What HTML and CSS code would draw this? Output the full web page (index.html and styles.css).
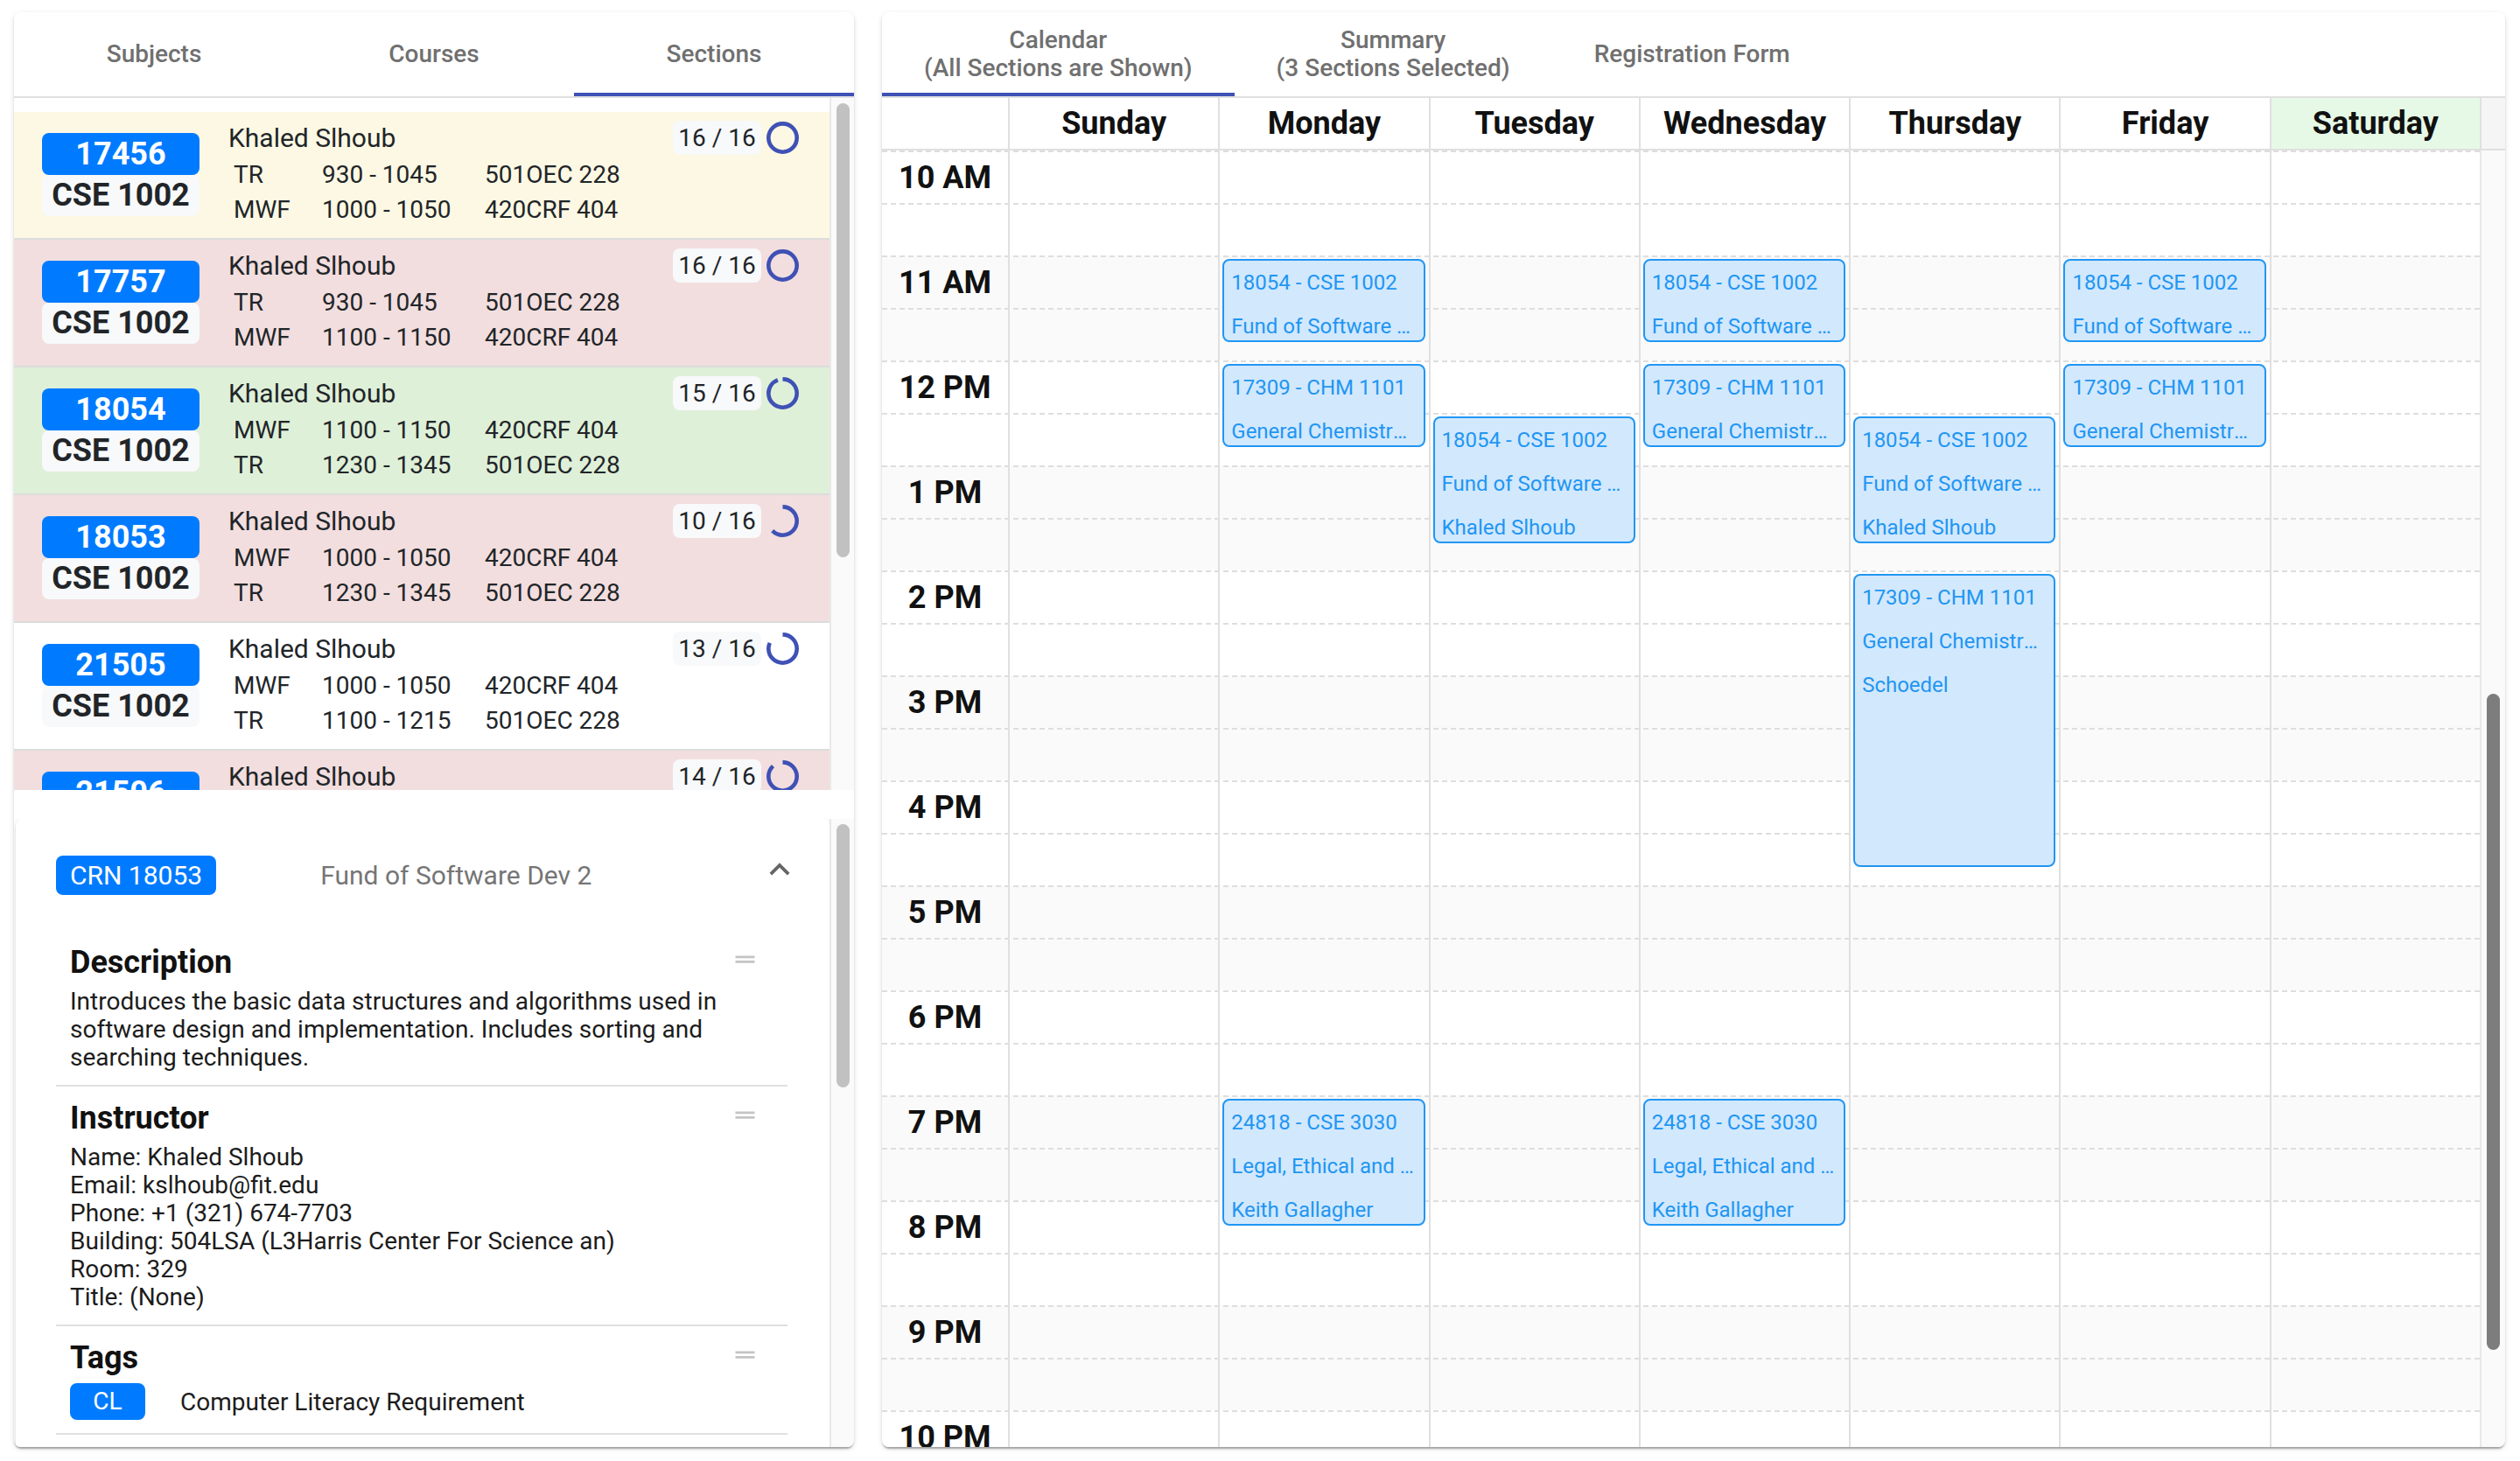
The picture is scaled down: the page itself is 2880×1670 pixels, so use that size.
FILE: index.html
```html
<!DOCTYPE html>
<html lang="en">
<head>
<meta charset="utf-8">
<title>Schedule Planner</title>
<link rel="stylesheet" href="styles.css">
</head>
<body>
<div class="app">
  <section class="panel left">
    <nav class="tabs">
      <div class="tab tab-eq">Subjects</div>
      <div class="tab tab-eq">Courses</div>
      <div class="tab tab-eq selected">Sections</div>
    </nav>

    <div class="list-wrap">
      <div class="sections">
        <div class="sec bg-warn">
          <div class="crn"><div class="crn-num">17456</div><div class="crn-course">CSE 1002</div></div>
          <div class="info">
            <div class="name">Khaled Slhoub</div>
            <div class="meet"><span>TR</span><span>930 - 1045</span><span>501OEC 228</span><span>MWF</span><span>1000 - 1050</span><span>420CRF 404</span></div>
          </div>
          <div class="cap"><span class="count">16 / 16</span><svg class="ring" viewBox="0 0 36 36"><circle cx="18" cy="18" r="15.75" stroke-dasharray="98.96" stroke-dashoffset="0"/></svg></div>
        </div>
        <div class="sec bg-danger">
          <div class="crn"><div class="crn-num">17757</div><div class="crn-course">CSE 1002</div></div>
          <div class="info">
            <div class="name">Khaled Slhoub</div>
            <div class="meet"><span>TR</span><span>930 - 1045</span><span>501OEC 228</span><span>MWF</span><span>1100 - 1150</span><span>420CRF 404</span></div>
          </div>
          <div class="cap"><span class="count">16 / 16</span><svg class="ring" viewBox="0 0 36 36"><circle cx="18" cy="18" r="15.75" stroke-dasharray="98.96" stroke-dashoffset="0"/></svg></div>
        </div>
        <div class="sec bg-success">
          <div class="crn"><div class="crn-num">18054</div><div class="crn-course">CSE 1002</div></div>
          <div class="info">
            <div class="name">Khaled Slhoub</div>
            <div class="meet"><span>MWF</span><span>1100 - 1150</span><span>420CRF 404</span><span>TR</span><span>1230 - 1345</span><span>501OEC 228</span></div>
          </div>
          <div class="cap"><span class="count">15 / 16</span><svg class="ring" viewBox="0 0 36 36"><circle cx="18" cy="18" r="15.75" stroke-dasharray="98.96" stroke-dashoffset="6.18"/></svg></div>
        </div>
        <div class="sec bg-danger">
          <div class="crn"><div class="crn-num">18053</div><div class="crn-course">CSE 1002</div></div>
          <div class="info">
            <div class="name">Khaled Slhoub</div>
            <div class="meet"><span>MWF</span><span>1000 - 1050</span><span>420CRF 404</span><span>TR</span><span>1230 - 1345</span><span>501OEC 228</span></div>
          </div>
          <div class="cap"><span class="count">10 / 16</span><svg class="ring" viewBox="0 0 36 36"><circle cx="18" cy="18" r="15.75" stroke-dasharray="98.96" stroke-dashoffset="37.11"/></svg></div>
        </div>
        <div class="sec">
          <div class="crn"><div class="crn-num">21505</div><div class="crn-course">CSE 1002</div></div>
          <div class="info">
            <div class="name">Khaled Slhoub</div>
            <div class="meet"><span>MWF</span><span>1000 - 1050</span><span>420CRF 404</span><span>TR</span><span>1100 - 1215</span><span>501OEC 228</span></div>
          </div>
          <div class="cap"><span class="count">13 / 16</span><svg class="ring" viewBox="0 0 36 36"><circle cx="18" cy="18" r="15.75" stroke-dasharray="98.96" stroke-dashoffset="18.56"/></svg></div>
        </div>
        <div class="sec bg-danger">
          <div class="crn"><div class="crn-num">21506</div></div>
          <div class="info">
            <div class="name">Khaled Slhoub</div>
          </div>
          <div class="cap"><span class="count">14 / 16</span><svg class="ring" viewBox="0 0 36 36"><circle cx="18" cy="18" r="15.75" stroke-dasharray="98.96" stroke-dashoffset="12.37"/></svg></div>
        </div>
      </div>
      <div class="sbar"><div class="thumb thumb-list"></div></div>
    </div>

    <div class="details-wrap">
      <div class="details">
        <div class="acc">
          <div class="acc-sum">
            <span class="crn-badge">CRN 18053</span>
            <span class="acc-title">Fund of Software Dev 2</span>
            <svg class="chev" viewBox="0 0 24 24"><path d="M12 8l-6 6 1.41 1.41L12 10.83l4.59 4.58L18 14z"/></svg>
          </div>
          <div class="acc-body">
            <div class="sect">
              <div class="sect-head"><span class="sect-title">Description</span><svg class="handle" viewBox="0 0 24 24"><path d="M20 9H4v2h16V9zM4 15h16v-2H4v2z"/></svg></div>
              <p class="sect-text">Introduces the basic data structures and algorithms used in software design and implementation. Includes sorting and searching techniques.</p>
            </div>
            <div class="sect">
              <div class="sect-head"><span class="sect-title">Instructor</span><svg class="handle" viewBox="0 0 24 24"><path d="M20 9H4v2h16V9zM4 15h16v-2H4v2z"/></svg></div>
              <div class="sect-text">
                <div>Name: Khaled Slhoub</div>
                <div>Email: kslhoub@fit.edu</div>
                <div>Phone: +1 (321) 674-7703</div>
                <div>Building: 504LSA (L3Harris Center For Science an)</div>
                <div>Room: 329</div>
                <div>Title: (None)</div>
              </div>
            </div>
            <div class="sect">
              <div class="sect-head"><span class="sect-title">Tags</span><svg class="handle" viewBox="0 0 24 24"><path d="M20 9H4v2h16V9zM4 15h16v-2H4v2z"/></svg></div>
              <div class="tag-row"><span class="tag">CL</span><span>Computer Literacy Requirement</span></div>
            </div>
          </div>
        </div>
      </div>
      <div class="sbar"><div class="thumb thumb-details"></div></div>
    </div>
  </section>

  <section class="panel right">
    <nav class="tabs">
      <div class="tab tab-pad selected">Calendar<br>(All Sections are Shown)</div>
      <div class="tab tab-pad">Summary<br>(3 Sections Selected)</div>
      <div class="tab tab-pad">Registration Form</div>
    </nav>
    <div class="cal">
      <div class="cal-head">
        <div class="head-cell time-head"></div>
        <div class="head-cell">Sunday</div>
        <div class="head-cell">Monday</div>
        <div class="head-cell">Tuesday</div>
        <div class="head-cell">Wednesday</div>
        <div class="head-cell">Thursday</div>
        <div class="head-cell">Friday</div>
        <div class="head-cell today">Saturday</div>
        <div class="head-cell gutter"></div>
      </div>
      <div class="cal-main">
        <div class="cal-body">
          <div class="cal-canvas">
            <div class="hours">
              <div class="hour"><div class="half"><span class="hlabel">10 AM</span></div><div class="half"></div></div>
              <div class="hour"><div class="half"><span class="hlabel">11 AM</span></div><div class="half"></div></div>
              <div class="hour"><div class="half"><span class="hlabel">12 PM</span></div><div class="half"></div></div>
              <div class="hour"><div class="half"><span class="hlabel">1 PM</span></div><div class="half"></div></div>
              <div class="hour"><div class="half"><span class="hlabel">2 PM</span></div><div class="half"></div></div>
              <div class="hour"><div class="half"><span class="hlabel">3 PM</span></div><div class="half"></div></div>
              <div class="hour"><div class="half"><span class="hlabel">4 PM</span></div><div class="half"></div></div>
              <div class="hour"><div class="half"><span class="hlabel">5 PM</span></div><div class="half"></div></div>
              <div class="hour"><div class="half"><span class="hlabel">6 PM</span></div><div class="half"></div></div>
              <div class="hour"><div class="half"><span class="hlabel">7 PM</span></div><div class="half"></div></div>
              <div class="hour"><div class="half"><span class="hlabel">8 PM</span></div><div class="half"></div></div>
              <div class="hour"><div class="half"><span class="hlabel">9 PM</span></div><div class="half"></div></div>
              <div class="hour"><div class="half"><span class="hlabel">10 PM</span></div><div class="half"></div></div>
            </div>
            <div class="days">
              <div class="day"></div>
              <div class="day">
                <div class="ev" style="top:124px;height:95px"><div>18054 - CSE 1002</div><div>Fund of Software Dev 2</div></div>
                <div class="ev" style="top:244px;height:95px"><div>17309 - CHM 1101</div><div>General Chemistry 1</div></div>
                <div class="ev" style="top:1084px;height:145px"><div>24818 - CSE 3030</div><div>Legal, Ethical and Social Issues</div><div>Keith Gallagher</div></div>
              </div>
              <div class="day">
                <div class="ev" style="top:304px;height:145px"><div>18054 - CSE 1002</div><div>Fund of Software Dev 2</div><div>Khaled Slhoub</div></div>
              </div>
              <div class="day">
                <div class="ev" style="top:124px;height:95px"><div>18054 - CSE 1002</div><div>Fund of Software Dev 2</div></div>
                <div class="ev" style="top:244px;height:95px"><div>17309 - CHM 1101</div><div>General Chemistry 1</div></div>
                <div class="ev" style="top:1084px;height:145px"><div>24818 - CSE 3030</div><div>Legal, Ethical and Social Issues</div><div>Keith Gallagher</div></div>
              </div>
              <div class="day">
                <div class="ev" style="top:304px;height:145px"><div>18054 - CSE 1002</div><div>Fund of Software Dev 2</div><div>Khaled Slhoub</div></div>
                <div class="ev" style="top:484px;height:335px"><div>17309 - CHM 1101</div><div>General Chemistry 1</div><div>Schoedel</div></div>
              </div>
              <div class="day">
                <div class="ev" style="top:124px;height:95px"><div>18054 - CSE 1002</div><div>Fund of Software Dev 2</div></div>
                <div class="ev" style="top:244px;height:95px"><div>17309 - CHM 1101</div><div>General Chemistry 1</div></div>
              </div>
              <div class="day"></div>
            </div>
          </div>
        </div>
        <div class="sbar sbar-cal"><div class="thumb thumb-cal"></div></div>
      </div>
    </div>
  </section>
</div>
</body>
</html>
```

FILE: styles.css
```css
* { box-sizing: border-box; }
html, body { margin: 0; padding: 0; background: #fff; }
body {
  font-family: Roboto, "Noto Sans", "Liberation Sans", Arial, sans-serif;
  color: #212529;
  overflow: hidden;
}

.app {
  display: flex;
  gap: 32px;
  height: 1670px;
  padding: 14px 17px 16px 16px;
}

.panel {
  background: #fff;
  border-radius: 8px;
  box-shadow: 0 4px 2px -2px rgba(0,0,0,.2), 0 2px 2px 0 rgba(0,0,0,.14), 0 2px 6px 0 rgba(0,0,0,.12);
  overflow: hidden;
  display: flex;
  flex-direction: column;
}
.left { width: 960px; flex: none; }
.right { flex: 1; min-width: 0; }

/* tabs */
.tabs {
  display: flex;
  flex: none;
  height: 98px;
  border-bottom: 2px solid #e0e0e0;
}
.tab {
  position: relative;
  display: flex;
  align-items: center;
  justify-content: center;
  text-align: center;
  font-size: 28px;
  font-weight: 500;
  line-height: 32px;
  color: #707070;
}
.tab-eq { flex: 1; }
.tab-pad { flex: none; padding: 0 48px; }
.tab.selected::after {
  content: "";
  position: absolute;
  left: 0; right: 0; bottom: 0;
  height: 4px;
  background: #3f51b5;
}

/* drawn scrollbars */
.sbar {
  flex: none;
  width: 28px;
  padding: 0 5px 0 6px;
  background: #fafafa;
  border-left: 2px solid #e8e8e8;
}
.sbar-cal { width: 29px; padding-left: 6px; }
.thumb { width: 15px; border-radius: 8px; background: #c1c1c1; }
.thumb-list { margin-top: 6px; height: 519px; }
.thumb-details { margin-top: 6px; height: 301px; }
.thumb-cal { margin-top: 621px; height: 750px; background: #7d7d7d; }

/* section list */
.list-wrap { flex: none; height: 791px; display: flex; }
.sections {
  flex: 1;
  min-width: 0;
  overflow: hidden;
  padding-top: 16px;
}
.sec {
  display: flex;
  height: 146px;
  padding: 0 35px 0 32px;
  border-bottom: 2px solid #dcdcdc;
  background: #fff;
}
.bg-warn { background: #fcf8e3; }
.bg-danger { background: #f2dede; }
.bg-success { background: #dff0d8; }

.crn { width: 180px; margin-top: 24px; flex: none; }
.crn-num, .crn-course {
  font-size: 36px;
  font-weight: 700;
  text-align: center;
  border-radius: 8px;
}
.crn-num { height: 48px; line-height: 48px; background: #007bff; color: #fff; }
.crn-course { height: 47px; line-height: 47px; background: #f8f9fa; color: #212529; }

.info { flex: 1; margin-left: 33px; padding-top: 12px; }
.name { font-size: 30px; line-height: 36px; }
.meet {
  display: grid;
  grid-template-columns: 101px 186px auto;
  margin: 4px 0 0 6px;
  font-size: 28px;
  line-height: 40px;
}

.cap { display: flex; align-items: center; gap: 6px; margin-top: 10px; align-self: flex-start; }
.count {
  width: 101px;
  height: 39px;
  line-height: 39px;
  text-align: center;
  font-size: 28px;
  background: #f8f9fa;
  border-radius: 8px;
}
.ring { width: 37px; height: 37px; transform: rotate(-90deg); }
.ring circle { fill: none; stroke: #3f51b5; stroke-width: 4.5; }

/* details / accordion */
.details-wrap {
  flex: 1;
  min-height: 0;
  margin-top: 33px;
  display: flex;
}
.details { flex: 1; min-width: 0; overflow: hidden; }
.acc {
  margin-left: 2px;
  padding-bottom: 32px;
  background: #fff;
  border-radius: 8px 8px 0 0;
  box-shadow: 0 4px 2px -2px rgba(0,0,0,.2), 0 2px 2px 0 rgba(0,0,0,.14), 0 2px 6px 0 rgba(0,0,0,.12);
}
.acc-sum {
  display: flex;
  align-items: center;
  height: 128px;
  padding-left: 46px;
}
.crn-badge {
  height: 45px;
  line-height: 45px;
  padding: 0 16px;
  border-radius: 8px;
  background: #007bff;
  color: #fff;
  font-size: 30px;
}
.acc-title { margin-left: 119px; font-size: 30px; color: #757575; }
.chev {
  width: 46px;
  height: 46px;
  margin: -12px 34px 0 auto;
  fill: rgba(0,0,0,.6);
}
.acc-body { padding: 0 48px 0 46px; }
.sect { padding: 15px 16px; border-bottom: 2px solid #e0e0e0; }
.sect-head {
  display: flex;
  align-items: center;
  justify-content: space-between;
  height: 42px;
  margin-bottom: 8px;
}
.sect-title { font-size: 36px; font-weight: 700; line-height: 42px; color: #111; }
.handle { width: 33px; height: 33px; margin: -8px 16px 0 0; fill: #c4c4c4; }
.sect-text { margin: 0; font-size: 28px; line-height: 32px; color: #1c1c1c; }
.tag-row { display: flex; align-items: center; font-size: 28px; color: #1c1c1c; }
.tag {
  width: 86px;
  height: 42px;
  line-height: 42px;
  margin-right: 40px;
  text-align: center;
  border-radius: 8px;
  background: #007bff;
  color: #fff;
}

/* calendar */
.cal { flex: 1; min-height: 0; display: flex; flex-direction: column; }
.cal-head {
  flex: none;
  display: grid;
  grid-template-columns: 144px repeat(7, 1fr) 29px;
  height: 60px;
  border-bottom: 2px solid #e0e0e0;
}
.head-cell {
  display: flex;
  align-items: center;
  justify-content: center;
  border-left: 2px solid #e0e0e0;
  font-size: 36px;
  font-weight: 700;
  color: #111;
}
.time-head { border-left: 0; }
.today { background: #e6f9e6; }
.gutter { background: #f5f5f5; }

.cal-main { flex: 1; min-height: 0; display: flex; }
.cal-body { flex: 1; min-width: 0; overflow: hidden; }
.cal-canvas { display: grid; grid-template-columns: 144px repeat(7, 1fr); }
.hours { grid-column: 1 / -1; grid-row: 1; }
.hour { height: 120px; background: #fff; }
.hour:nth-child(even) { background: #fafafa; }
.half { height: 60px; border-top: 2px dashed #dedede; }
.hlabel {
  display: block;
  width: 144px;
  text-align: center;
  font-size: 36px;
  font-weight: 700;
  line-height: 58px;
  color: #111;
}
.days {
  grid-column: 2 / -1;
  grid-row: 1;
  display: grid;
  grid-template-columns: repeat(7, 1fr);
}
.day { position: relative; border-left: 2px solid #e0e0e0; }
.ev {
  position: absolute;
  left: 3px;
  right: 4px;
  padding: 0 8px 0 8px;
  border: 2px solid #2196f3;
  border-radius: 8px;
  background: #d2e8fd;
  color: #2196f3;
  font-size: 24px;
  line-height: 50px;
  overflow: hidden;
}
.ev div { white-space: nowrap; overflow: hidden; text-overflow: ellipsis; }
```
